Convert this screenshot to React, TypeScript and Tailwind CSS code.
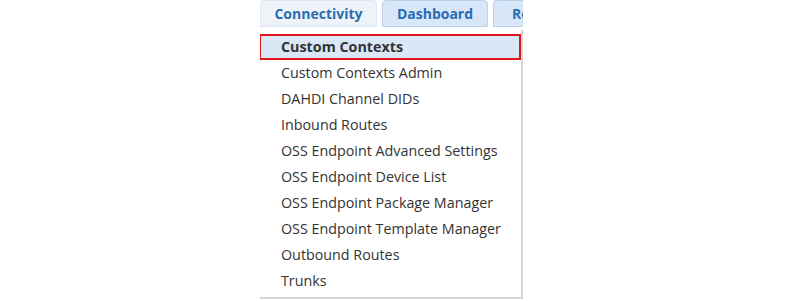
const items = [
  "Custom Contexts Admin",
  "DAHDI Channel DIDs",
  "Inbound Routes",
  "OSS Endpoint Advanced Settings",
  "OSS Endpoint Device List",
  "OSS Endpoint Package Manager",
  "OSS Endpoint Template Manager",
  "Outbound Routes",
  "Trunks",
];

export default function App() {
  return (
    <div className="h-[301px] w-[800px] overflow-hidden bg-white font-['Open_Sans',sans-serif]">
      <div className="ml-[260px] w-[263px] overflow-hidden">
        {/* top menu tabs */}
        <div className="flex h-[28px] gap-[5px] whitespace-nowrap">
          <div className="flex h-[27px] w-[117px] shrink-0 items-center justify-center rounded-t-[4px] border border-[#dde6f1] bg-[#eef3f9] text-[14px] font-bold text-[#2a6db3]">
            Connectivity
          </div>
          <div className="flex h-[27px] w-[106px] shrink-0 items-center justify-center rounded-t-[4px] border border-[#b9d1ec] bg-[#d8e7f8] text-[14px] font-bold text-[#2a6db3]">
            Dashboard
          </div>
          <div className="flex h-[27px] w-[30px] shrink-0 items-center overflow-hidden rounded-tl-[4px] border border-r-0 border-[#b9d1ec] bg-[#d8e7f8] pl-[18px] text-[14px] font-bold text-[#2a6db3]">
            Re
          </div>
        </div>

        {/* dropdown */}
        <div className="mt-[2px] w-[263px] border-r-2 border-b-2 border-[#d6d6d6] bg-white pb-[3px] pt-[4px]">
          <div className="-ml-px flex h-[26px] items-center border-2 border-[#e3161d] bg-[#d9e7f7] pl-[20px] text-[14.3px] font-bold text-[#333]">
            Custom Contexts
          </div>
          {items.map((it) => (
            <div key={it} className="flex h-[26px] items-center pl-[21px] text-[14.3px] text-[#333]">
              {it}
            </div>
          ))}
        </div>
      </div>
    </div>
  );
}
